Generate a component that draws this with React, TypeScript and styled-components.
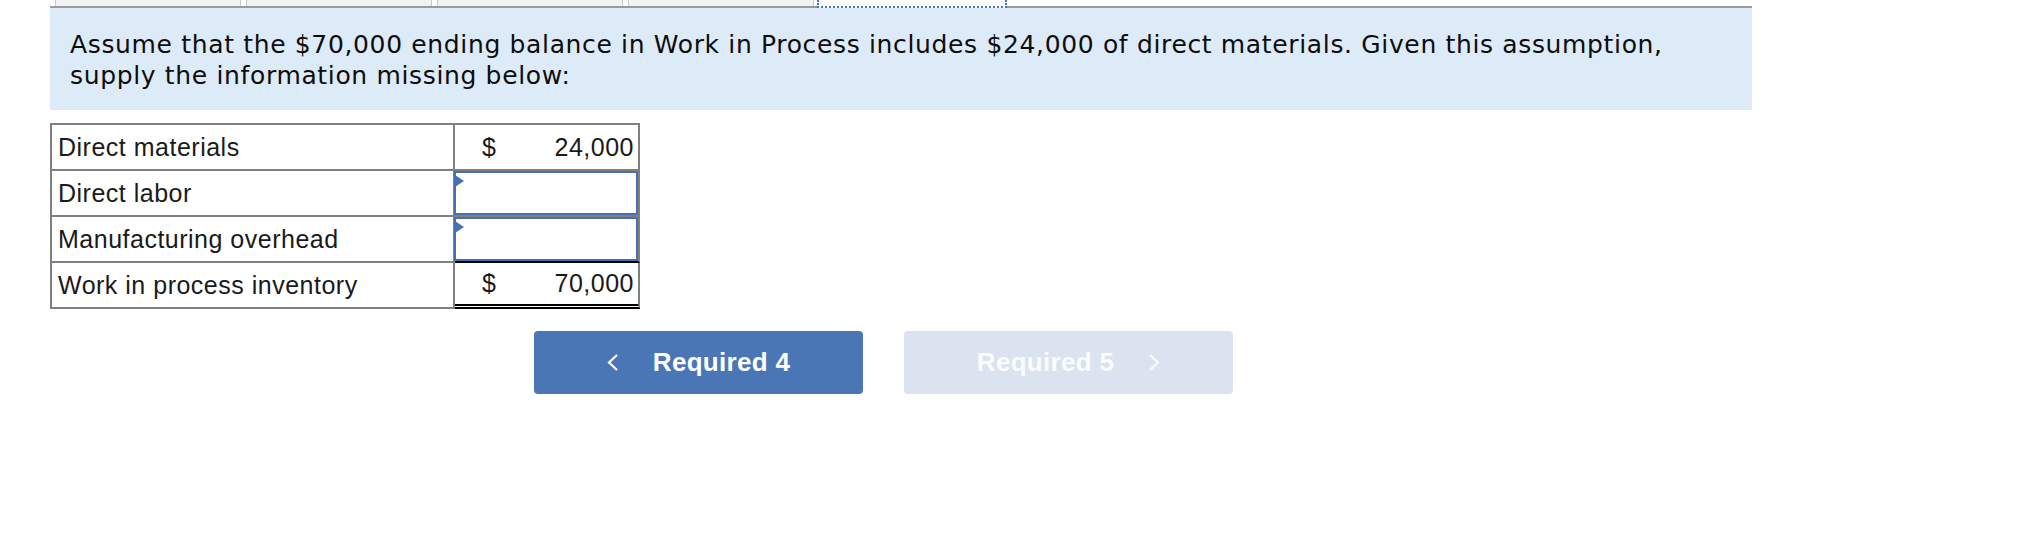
import { FC } from 'react'
import styled, { createGlobalStyle, css } from 'styled-components'

const GlobalStyle = createGlobalStyle`
  body {
    margin: 0;
    background: #ffffff;
  }
`

interface Row {
  label: string
  value?: string
  input?: boolean
  total?: boolean
}

const rows: Row[] = [
  { label: 'Direct materials', value: '24,000' },
  { label: 'Direct labor', input: true },
  { label: 'Manufacturing overhead', input: true },
  { label: 'Work in process inventory', value: '70,000', total: true }
]

const App: FC = () => (
  <Page>
    <GlobalStyle />
    <TabStrip>
      <Tab />
      <Tab />
      <Tab />
      <Tab />
      <Tab active />
    </TabStrip>
    <Prompt>
      Assume that the $70,000 ending balance in Work in Process includes $24,000 of direct materials. Given this
      assumption, supply the information missing below:
    </Prompt>
    <Sheet>
      {rows.map((row, i) => {
        const beforeTotal = rows[i + 1]?.total
        return (
          <SheetRow key={row.label}>
            <LabelCell>{row.label}</LabelCell>
            <ValueCell total={row.total} ruled={beforeTotal} entry={row.input}>
              {row.input ? (
                <AnswerInput>
                  <Marker />
                </AnswerInput>
              ) : (
                <>
                  <span>$</span>
                  <span>{row.value}</span>
                </>
              )}
            </ValueCell>
          </SheetRow>
        )
      })}
    </Sheet>
    <NavBar>
      <NavButton>
        <Chevron viewBox="0 0 11 17">
          <polyline points="10,1 2,8.5 10,16" />
        </Chevron>
        Required 4
      </NavButton>
      <NavButton disabled>
        Required 5
        <Chevron viewBox="0 0 11 17">
          <polyline points="1,1 9,8.5 1,16" />
        </Chevron>
      </NavButton>
    </NavBar>
  </Page>
)

const Page = styled.div`
  padding-left: 50px;
  width: 1702px;
`

const TabStrip = styled.div`
  display: flex;
  gap: 5px;
  height: 6px;
  padding-left: 5px;
  border-bottom: 2px solid #9a9a9a;
`

const Tab = styled.div<{ active?: boolean }>`
  width: 184px;
  height: 6px;
  background: #f2f2f2;
  border-left: 1px solid #c9c9c9;
  border-right: 1px solid #c9c9c9;

  ${({ active }) =>
    active &&
    css`
      width: 186px;
      margin-left: -2px;
      background: #ffffff;
      border-left: 2px dotted #4a76b8;
      border-right: 2px dotted #4a76b8;
      border-bottom: 2px dotted #4a76b8;
    `}
`

const Prompt = styled.p`
  margin: 0;
  padding: 21px 20px 19px 20px;
  background: #ddeaf7;
  color: #0d0d0d;
  font-family: 'DejaVu Sans', Verdana, sans-serif;
  font-size: 25px;
  letter-spacing: 0.65px;
  line-height: 31px;
`

const Sheet = styled.div`
  display: grid;
  grid-template-columns: 403px 185px;
  width: fit-content;
  margin-top: 13px;
  border-top: 2px solid #808080;
  border-left: 2px solid #808080;
  font-family: 'Liberation Sans', Arial, sans-serif;
  font-size: 25px;
  letter-spacing: 0.5px;
  color: #1a1a1a;
`

const SheetRow = styled.div`
  display: contents;
`

const LabelCell = styled.div`
  display: flex;
  align-items: center;
  height: 44px;
  padding-left: 6px;
  border-right: 2px solid #808080;
  border-bottom: 2px solid #808080;
`

const ValueCell = styled.div<{ total?: boolean; ruled?: boolean; entry?: boolean }>`
  display: flex;
  align-items: center;
  justify-content: space-between;
  height: 44px;
  padding: ${({ entry }) => (entry ? '0' : '0 4px 0 27px')};
  border-right: 2px solid #808080;
  border-bottom: 2px solid ${({ ruled }) => (ruled ? '#000000' : '#808080')};

  ${({ total }) =>
    total &&
    css`
      height: 41px;
      border-bottom: 5px double #000000;
    `}
`

const AnswerInput = styled.div`
  position: relative;
  flex: 1;
  align-self: stretch;
  margin-left: -1px;
  border: 2px solid #4670b2;
  background: #ffffff;
`

const Marker = styled.span`
  position: absolute;
  top: 2px;
  left: -1px;
  width: 0;
  height: 0;
  border-top: 6px solid transparent;
  border-bottom: 6px solid transparent;
  border-left: 9px solid #4670b2;
`

const NavBar = styled.div`
  display: flex;
  gap: 41px;
  margin-top: 22px;
  padding-left: 484px;
`

const NavButton = styled.button`
  display: flex;
  align-items: center;
  justify-content: center;
  gap: 35px;
  width: 329px;
  height: 63px;
  padding: 0;
  border: none;
  border-radius: 4px;
  background: #4a76b6;
  color: #ffffff;
  font-family: 'Liberation Sans', Arial, sans-serif;
  font-size: 26px;
  font-weight: 700;
  letter-spacing: 0.3px;

  &:disabled {
    background: #dae3ef;
    color: #fbfcfe;
  }
`

const Chevron = styled.svg`
  width: 11px;
  height: 17px;
  fill: none;
  stroke: currentColor;
  stroke-width: 2.2;
`

export default App
